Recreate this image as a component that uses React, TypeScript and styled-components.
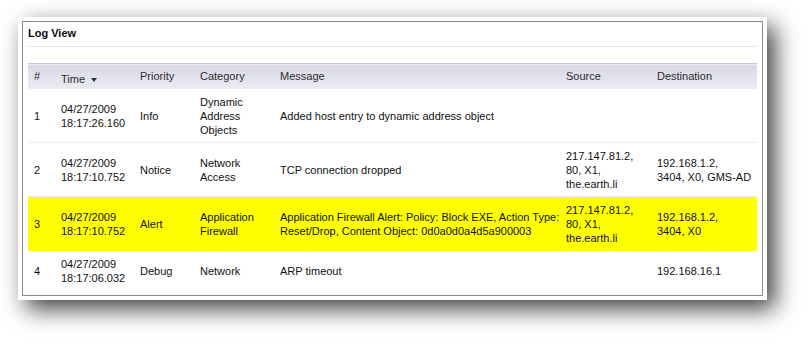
import styled, { createGlobalStyle } from 'styled-components'

const GlobalStyle = createGlobalStyle`
	html, body {
		margin: 0;
		padding: 0;
		background: #ffffff;
	}

	body {
		min-height: 344px;
		font-family: "Liberation Sans", Arial, sans-serif;
		font-size: 11px;
		color: #111111;
	}

	#root {
		min-height: 344px;
		padding-top: 17px;
		box-sizing: border-box;
	}
`

const Frame = styled.div`
	margin: 0 0 0 18px;
	padding: 4px;
	width: 741px;
	background: #ffffff;
	box-shadow: 8px 9px 22px rgba(0, 0, 0, 0.75);
`

const Panel = styled.div`
	box-sizing: border-box;
	width: 741px;
	height: 275px;
	border: 1px solid #8a8a8a;
	background: #ffffff;
	padding: 0 5px 5px 5px;
`

const Title = styled.h2`
	margin: 0 0 16px 0;
	padding: 4px 0 5px 0;
	font-size: 11px;
	line-height: 15px;
	font-weight: bold;
	color: #0a0a0a;
	border-bottom: 1px solid #e2e2e2;
`

const Table = styled.table`
	width: 100%;
	table-layout: fixed;
	border-collapse: collapse;
	border-spacing: 0;
`

const HeaderRow = styled.tr`
	background: linear-gradient(#d9d9e8, #ebebf3);
	border-top: 1px solid #c6c6d6;
`

const HeaderCell = styled.th<{ $sorted?: boolean }>`
	height: 25px;
	box-sizing: border-box;
	padding: ${props => props.$sorted ? '6px 4px 0 6px' : '0 4px 0 6px'};
	font-weight: normal;
	text-align: left;
	vertical-align: middle;
	line-height: 15px;
	color: #2c2c2c;
	white-space: nowrap;
`

const SortArrow = styled.span`
	display: inline-block;
	margin-left: 6px;
	width: 0;
	height: 0;
	border-left: 3px solid transparent;
	border-right: 3px solid transparent;
	border-top: 4px solid #333333;
	vertical-align: 1px;
`

const Row = styled.tr<{ $highlight?: boolean; $last?: boolean }>`
	background: ${props => props.$highlight ? '#ffff00' : '#ffffff'};

	& > td {
		border-bottom: 1px solid ${props => props.$last ? 'transparent' : props.$highlight ? '#ffff00' : '#ebebeb'};
	}
`

const Cell = styled.td`
	padding: 6px 0 5px 6px;
	line-height: 14px;
	vertical-align: middle;
	white-space: pre;
	overflow: visible;
	color: #111111;
`

interface LogEntry {
	id: number
	time: string
	priority: string
	category: string
	message: string
	source: string
	destination: string
	alert?: boolean
}

const entries: LogEntry[] = [
	{
		id: 1,
		time: '04/27/2009\n18:17:26.160',
		priority: 'Info',
		category: 'Dynamic\nAddress\nObjects',
		message: 'Added host entry to dynamic address object',
		source: '',
		destination: '',
	},
	{
		id: 2,
		time: '04/27/2009\n18:17:10.752',
		priority: 'Notice',
		category: 'Network\nAccess',
		message: 'TCP connection dropped',
		source: '217.147.81.2,\n80, X1,\nthe.earth.li',
		destination: '192.168.1.2,\n3404, X0, GMS-AD',
	},
	{
		id: 3,
		time: '04/27/2009\n18:17:10.752',
		priority: 'Alert',
		category: 'Application\nFirewall',
		message: 'Application Firewall Alert: Policy: Block EXE, Action Type:\nReset/Drop, Content Object: 0d0a0d0a4d5a900003',
		source: '217.147.81.2,\n80, X1,\nthe.earth.li',
		destination: '192.168.1.2,\n3404, X0',
		alert: true,
	},
	{
		id: 4,
		time: '04/27/2009\n18:17:06.032',
		priority: 'Debug',
		category: 'Network',
		message: 'ARP timeout',
		source: '',
		destination: '192.168.16.1',
	},
]

const columnWidths = [27, 79, 60, 80, 286, 91, 106]

const LogView = () => {
	return (
		<Frame>
			<Panel>
				<Title>Log View</Title>
				<Table>
					<colgroup>
						{columnWidths.map((w, i) => <col key={i} style={{ width: w }} />)}
					</colgroup>
					<thead>
						<HeaderRow>
							<HeaderCell>#</HeaderCell>
							<HeaderCell $sorted>Time<SortArrow /></HeaderCell>
							<HeaderCell>Priority</HeaderCell>
							<HeaderCell>Category</HeaderCell>
							<HeaderCell>Message</HeaderCell>
							<HeaderCell>Source</HeaderCell>
							<HeaderCell>Destination</HeaderCell>
						</HeaderRow>
					</thead>
					<tbody>
						{entries.map((entry, i) => (
							<Row key={entry.id} $highlight={entry.alert} $last={i === entries.length - 1}>
								<Cell>{entry.id}</Cell>
								<Cell>{entry.time}</Cell>
								<Cell>{entry.priority}</Cell>
								<Cell>{entry.category}</Cell>
								<Cell>{entry.message}</Cell>
								<Cell>{entry.source}</Cell>
								<Cell>{entry.destination}</Cell>
							</Row>
						))}
					</tbody>
				</Table>
			</Panel>
		</Frame>
	)
}

const App = () => {
	return (
		<>
			<GlobalStyle />
			<LogView />
		</>
	)
}

export default App
